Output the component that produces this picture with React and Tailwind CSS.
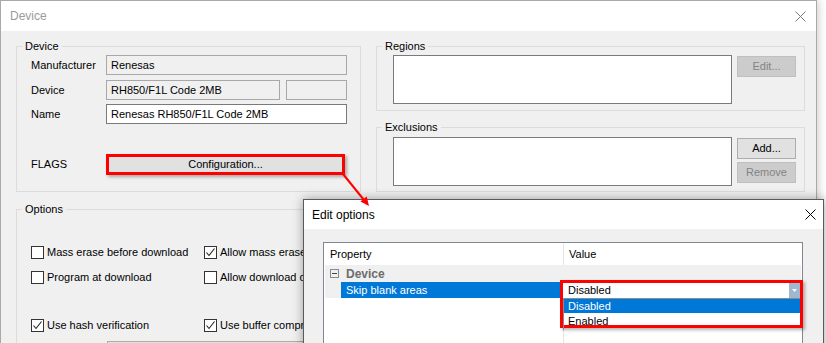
import React from 'react'

const CloseIcon = ({ className }) => (
  <svg width="11" height="11" viewBox="0 0 11 11" className={className}>
    <path d="M0.5 0.5 L10.5 10.5 M10.5 0.5 L0.5 10.5" stroke="currentColor" strokeWidth="1" />
  </svg>
)

function Check({ checked, label, className = '' }) {
  return (
    <div className={`flex items-center h-[14px] ${className}`}>
      <div className="w-[13px] h-[13px] border border-[#333333] bg-white flex items-center justify-center shrink-0">
        {checked && (
          <svg width="11" height="11" viewBox="0 0 11 11">
            <path d="M1.5 5.5 L4 8.5 L9.5 1.5" fill="none" stroke="#222" strokeWidth="1.1" />
          </svg>
        )}
      </div>
      <span className="ml-[3px] whitespace-nowrap">{label}</span>
    </div>
  )
}

function Button({ children, disabled, className = '' }) {
  return (
    <div
      className={`flex items-center justify-center border ${
        disabled ? 'bg-[#cccccc] border-[#bfbfbf] text-[#838383]' : 'bg-[#e1e1e1] border-[#adadad] text-black'
      } ${className}`}
    >
      {children}
    </div>
  )
}

function Group({ title, className = '', innerClassName = '', children }) {
  return (
    <fieldset className={`border border-[#dcdcdc] ${className}`}>
      <legend className="ml-[5px] px-[3px] leading-[14px]">{title}</legend>
      <div className={innerClassName}>{children}</div>
    </fieldset>
  )
}

function DeviceWindow() {
  return (
    <div className="w-[817px] h-[400px] border border-[#a9a9a9] bg-[#f0f0f0] shadow-[2px_0_8px_rgba(0,0,0,0.18)]">
      <div className="h-[30px] bg-white flex items-center justify-between pl-[9px] pr-[10px]">
        <span className="text-[12px] text-[#9a9a9a]">Device</span>
        <CloseIcon className="text-[#7a7a7a]" />
      </div>

      <div className="pt-[8px] pl-[15px]">
        <div className="flex gap-[15px]">
          <Group title="Device" className="w-[345px] h-[153px]" innerClassName="pl-[14px] pt-[2px]">
            <div className="flex items-center h-[20px]">
              <span className="w-[75px]">Manufacturer</span>
              <div className="w-[241px] h-[20px] border border-[#a8a8a8] bg-[#f0f0f0] flex items-center px-[4px]">Renesas</div>
            </div>
            <div className="flex items-center h-[20px] mt-[5px]">
              <span className="w-[75px]">Device</span>
              <div className="w-[174px] h-[20px] border border-[#a8a8a8] bg-[#f0f0f0] flex items-center px-[4px]">RH850/F1L Code 2MB</div>
              <div className="w-[61px] h-[20px] ml-[6px] border border-[#a8a8a8] bg-[#f0f0f0]" />
            </div>
            <div className="flex items-center h-[20px] mt-[4px]">
              <span className="w-[75px]">Name</span>
              <div className="w-[241px] h-[20px] border border-[#7a7a7a] bg-white flex items-center px-[4px]">Renesas RH850/F1L Code 2MB</div>
            </div>
            <div className="flex items-center h-[21px] mt-[30px]">
              <span className="w-[75px]">FLAGS</span>
              <div className="w-[239px] h-[21px] border-[3px] border-[#ff0000] bg-[#e1e1e1] flex items-center justify-center shadow-[2px_2px_3px_rgba(0,0,0,0.3)]">
                Configuration...
              </div>
            </div>
          </Group>

          <div className="flex flex-col">
            <Group title="Regions" className="w-[429px] h-[72px]" innerClassName="pl-[16px] pt-[2px]">
              <div className="flex">
                <div className="w-[339px] h-[49px] border border-[#7a7a7a] bg-white" />
                <Button disabled className="w-[59px] h-[21px] ml-[5px] mt-[1px]">Edit...</Button>
              </div>
            </Group>
            <Group title="Exclusions" className="w-[429px] h-[72px] mt-[9px]" innerClassName="pl-[16px] pt-[3px]">
              <div className="flex">
                <div className="w-[339px] h-[49px] border border-[#7a7a7a] bg-white" />
                <div className="flex flex-col ml-[5px] mt-[1px] gap-[3px]">
                  <Button className="w-[59px] h-[21px]">Add...</Button>
                  <Button disabled className="w-[59px] h-[21px]">Remove</Button>
                </div>
              </div>
            </Group>
          </div>
        </div>

        <Group title="Options" className="w-[789px] h-[200px] mt-[10px]" innerClassName="pl-[14px] pt-[29px]">
          <div className="flex">
            <Check className="w-[173px]" label="Mass erase before download" />
            <div className="w-[99px] overflow-hidden">
              <Check checked label="Allow mass erase before download" />
            </div>
          </div>
          <div className="flex mt-[11px]">
            <Check className="w-[173px]" label="Program at download" />
            <div className="w-[99px] overflow-hidden">
              <Check label="Allow download only" />
            </div>
          </div>
          <div className="flex mt-[34px]">
            <Check checked className="w-[173px]" label="Use hash verification" />
            <div className="w-[99px] overflow-hidden">
              <Check checked label="Use buffer compression" />
            </div>
          </div>
          <div className="ml-[76px] mt-[9px] w-[240px] h-[20px] border border-[#adadad] bg-[#e1e1e1]" />
        </Group>
      </div>
    </div>
  )
}

function EditOptions() {
  return (
    <div className="absolute left-[303px] top-[199px] w-[521px] h-[170px] border border-[#5a5a5a] bg-[#f0f0f0] shadow-[0_0_10px_rgba(0,0,0,0.35)]">
      <div className="h-[29px] bg-white flex items-center justify-between pl-[8px] pr-[7px]">
        <span className="text-[12px] text-black">Edit options</span>
        <CloseIcon className="text-black" />
      </div>
      <div className="pt-[13px] pl-[19px]">
        <div className="w-[480px] h-[120px] border border-[#828790] bg-white flex flex-col">
          <div className="flex h-[22px] shrink-0">
            <div className="w-[239px] pl-[6px] flex items-center">Property</div>
            <div className="flex-1 border-l border-[#e5e5e5] pl-[5px] flex items-center">Value</div>
          </div>
          <div className="h-[17px] mx-[1px] bg-[#f0f0f0] flex items-center shrink-0">
            <div className="ml-[5px] w-[9px] h-[9px] border border-[#8a8a8a] flex items-center justify-center">
              <div className="w-[5px] h-[1px] bg-[#444]" />
            </div>
            <span className="ml-[7px] text-[12px] font-bold text-[#6d6d6d]">Device</span>
          </div>
          <div className="flex h-[16px] shrink-0">
            <div className="w-[16px] ml-[1px] bg-[#f0f0f0]" />
            <div className="w-[222px] bg-[#0078d7] text-white pl-[5px] flex items-center">Skip blank areas</div>
            <div className="flex-1 border-l border-[#e5e5e5]" />
          </div>
          <div className="flex flex-1">
            <div className="w-[239px]" />
            <div className="flex-1 border-l border-[#e5e5e5]" />
          </div>
        </div>
      </div>
    </div>
  )
}

function ValueDropdown() {
  return (
    <div className="absolute left-[560px] top-[280px] w-[243px] h-[48px] border-[3px] border-[#ff0000] bg-white shadow-[2px_2px_3px_rgba(0,0,0,0.3)] flex flex-col">
      <div className="h-[15px] flex items-center">
        <span className="flex-1 pl-[5px]">Disabled</span>
        <div className="w-[11px] h-[15px] bg-[#9fb7cf] flex items-center justify-center">
          <svg width="5" height="3" viewBox="0 0 5 3">
            <path d="M0 0 H5 L2.5 3 Z" fill="#ffffff" />
          </svg>
        </div>
      </div>
      <div className="flex-1 border-t border-l border-[#8a8a8a] flex flex-col">
        <div className="h-[14px] bg-[#0078d7] text-white pl-[4px] flex items-center">Disabled</div>
        <div className="flex-1 pl-[4px] flex items-center">Enabled</div>
      </div>
    </div>
  )
}

export default function App() {
  return (
    <div className="relative w-[826px] h-[343px] overflow-hidden bg-white text-[11px] text-black font-['Segoe_UI','Liberation_Sans',Arial,sans-serif]">
      <DeviceWindow />
      <EditOptions />
      <ValueDropdown />
      <svg className="absolute left-0 top-0 pointer-events-none" width="826" height="343">
        <line x1="343" y1="174" x2="364" y2="200" stroke="#ff0000" strokeWidth="2" />
        <polygon points="369,206 360.4,201.4 366.7,196.4" fill="#ff0000" />
      </svg>
    </div>
  )
}
